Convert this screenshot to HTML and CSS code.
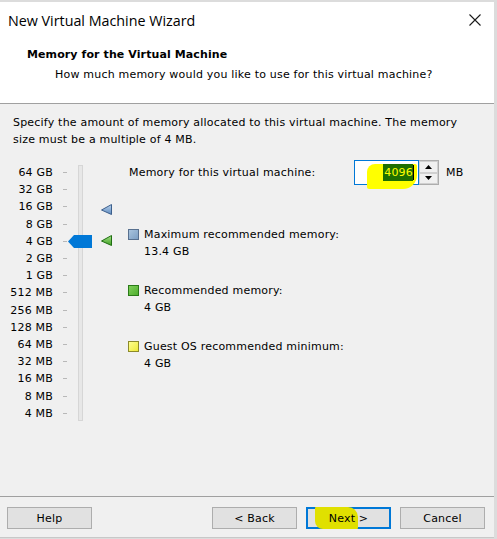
FILE: index.html
```html
<!DOCTYPE html>
<html>
<head>
<meta charset="utf-8">
<link rel="stylesheet" href="styles.css">
</head>
<body>
<div class="window">
  <div class="titlebar">
    <span class="title">New Virtual Machine Wizard</span>
    <svg class="close" width="12" height="12" viewBox="0 0 12 12"><path d="M0.5 0.5 L11.5 11.5 M11.5 0.5 L0.5 11.5" stroke="#1a1a1a" stroke-width="1.1" fill="none"/></svg>
  </div>
  <div class="header">
    <div class="h-title">Memory for the Virtual Machine</div>
    <div class="h-sub">How much memory would you like to use for this virtual machine?</div>
  </div>
  <div class="body">
    <p class="intro">Specify the amount of memory allocated to this virtual machine. The memory<br>size must be a multiple of 4 MB.</p>
    <div class="main">
      <div class="scale">
        <div class="row"><span class="lbl">64 GB</span><span class="tick"></span></div>
        <div class="row"><span class="lbl">32 GB</span><span class="tick"></span></div>
        <div class="row"><span class="lbl">16 GB</span><span class="tick"></span></div>
        <div class="row"><span class="lbl">8 GB</span><span class="tick"></span></div>
        <div class="row"><span class="lbl">4 GB</span><span class="tick"></span></div>
        <div class="row"><span class="lbl">2 GB</span><span class="tick"></span></div>
        <div class="row"><span class="lbl">1 GB</span><span class="tick"></span></div>
        <div class="row"><span class="lbl">512 MB</span><span class="tick"></span></div>
        <div class="row"><span class="lbl">256 MB</span><span class="tick"></span></div>
        <div class="row"><span class="lbl">128 MB</span><span class="tick"></span></div>
        <div class="row"><span class="lbl">64 MB</span><span class="tick"></span></div>
        <div class="row"><span class="lbl">32 MB</span><span class="tick"></span></div>
        <div class="row"><span class="lbl">16 MB</span><span class="tick"></span></div>
        <div class="row"><span class="lbl">8 MB</span><span class="tick"></span></div>
        <div class="row"><span class="lbl">4 MB</span><span class="tick"></span></div>
      </div>
      <div class="slider">
        <div class="track"></div>
        <svg class="thumb" width="24" height="13" viewBox="0 0 24 13"><path d="M0 6.5 L6 0 H24 V13 H6 Z" fill="#0078d7"/></svg>
        <svg class="marker marker-max" width="12" height="11" viewBox="0 0 12 11">
          <defs><linearGradient id="gb" x1="0" y1="0" x2="0" y2="1"><stop offset="0" stop-color="#b9d3ee"/><stop offset="1" stop-color="#5d89bd"/></linearGradient></defs>
          <path d="M0.5 6 L10.5 0.5 V10.5 Z" fill="url(#gb)" stroke="#3c5f8c" stroke-width="1"/>
        </svg>
        <svg class="marker marker-rec" width="12" height="11" viewBox="0 0 12 11">
          <defs><linearGradient id="gg" x1="0" y1="0" x2="0" y2="1"><stop offset="0" stop-color="#a6e08a"/><stop offset="1" stop-color="#3da020"/></linearGradient></defs>
          <path d="M0.5 6 L10.5 0.5 V10.5 Z" fill="url(#gg)" stroke="#1f6e12" stroke-width="1"/>
        </svg>
      </div>
      <div class="info">
        <div class="mem-row">
          <span class="mem-label">Memory for this virtual machine:</span>
          <div class="spin">
            <div class="field">
              <span class="hl"></span>
              <span class="sel">4096</span><span class="caret"></span>
            </div>
            <div class="spin-btns">
              <div class="sbtn"><svg width="7" height="4" viewBox="0 0 7 4"><path d="M0 4 L3.5 0 L7 4 Z" fill="#000"/></svg></div>
              <div class="sbtn"><svg width="7" height="4" viewBox="0 0 7 4"><path d="M0 0 L3.5 4 L7 0 Z" fill="#000"/></svg></div>
            </div>
          </div>
          <span class="unit">MB</span>
        </div>
        <div class="legend">
          <div class="item">
            <div class="item-head"><span class="sq sq-max"></span><span>Maximum recommended memory:</span></div>
            <div class="item-val">13.4 GB</div>
          </div>
          <div class="item">
            <div class="item-head"><span class="sq sq-rec"></span><span>Recommended memory:</span></div>
            <div class="item-val">4 GB</div>
          </div>
          <div class="item">
            <div class="item-head"><span class="sq sq-min"></span><span>Guest OS recommended minimum:</span></div>
            <div class="item-val">4 GB</div>
          </div>
        </div>
      </div>
    </div>
  </div>
  <div class="footer">
    <button class="btn">Help</button>
    <div class="spacer"></div>
    <button class="btn">&lt; Back</button>
    <button class="btn btn-next"><span class="hl-next"></span><span class="btn-text">Next &gt;</span></button>
    <button class="btn">Cancel</button>
  </div>
</div>
</body>
</html>
```

FILE: styles.css
```css
* { box-sizing: border-box; }
html, body { margin: 0; padding: 0; }
body {
  background: #dcdcdc;
  font-family: "DejaVu Sans", Tahoma, sans-serif;
  font-size: 11px;
  letter-spacing: 0.2px;
  color: #000;
  width: 497px;
  height: 539px;
  overflow: hidden;
}
.window {
  margin-top: 2px;
  width: 494px;
  height: 536px;
  background: #f0f0f0;
  display: flex;
  flex-direction: column;
}
.titlebar {
  background: #fff;
  height: 36px;
  display: flex;
  align-items: center;
  padding-left: 8px;
  padding-right: 13px;
}
.title {
  font-family: "Open Sans", "Noto Sans", sans-serif;
  font-size: 14.3px;
  letter-spacing: 0;
  color: #000;
  flex: 1;
}
.close { display: block; }
.header {
  background: #fff;
  height: 66px;
  border-bottom: 1px solid #a0a0a0;
  padding: 9px 0 0 27px;
}
.h-title { font-weight: bold; line-height: 16px; letter-spacing: 0.1px; }
.h-sub { line-height: 16px; margin-top: 4px; padding-left: 28px; }
.body { flex: 1; padding: 0 0 0 13px; }
.intro { margin: 10px 0 0; line-height: 17px; }
.main {
  display: flex;
  margin-left: -13px;
  margin-top: 16px;
}
.scale { width: 68px; }
.row {
  display: flex;
  align-items: center;
  height: 17.2px;
}
.lbl { width: 53px; text-align: right; }
.tick {
  width: 4px;
  height: 1px;
  background: #b8b8b8;
  margin-left: 10px;
}
.slider {
  position: relative;
  width: 60px;
}
.track {
  margin-left: 10px;
  margin-top: 1px;
  width: 5px;
  height: 256px;
  background: #e7e7e7;
  border: 1px solid #d6d6d6;
}
.thumb { position: absolute; left: 0; top: 71px; }
.marker { position: absolute; left: 33px; }
.marker-max { top: 40px; }
.marker-rec { top: 71px; }
.info { flex: 1; }
.mem-row {
  display: flex;
  align-items: center;
  margin-top: -4px;
  height: 25px;
}
.mem-label { width: 226px; padding-left: 1px; }
.spin { display: flex; height: 25px; }
.field {
  position: relative;
  width: 65px;
  height: 25px;
  background: #fff;
  border: 1px solid #0078d7;
  display: flex;
  align-items: center;
  justify-content: flex-end;
  padding-right: 4px;
}
.hl {
  position: absolute;
  left: 12px;
  top: 3px;
  width: 50px;
  height: 25px;
  background: #ffff00;
  border-radius: 8px 2px 14px 2px;
}
.sel {
  position: relative;
  background: #1e6f00;
  color: #ffff00;
  padding: 1px 0 1px 1px;
  line-height: 15px;
}
.caret {
  position: relative;
  width: 1px;
  height: 15px;
  background: #000;
}
.spin-btns {
  width: 20px;
  display: flex;
  flex-direction: column;
  border: 1px solid #adadad;
  border-left: none;
}
.sbtn {
  flex: 1;
  display: flex;
  align-items: center;
  justify-content: center;
  background: #f0f0f0;
  border: 1px solid #d0d0d0;
}
.unit { margin-left: 7px; }
.legend { margin-top: 41px; }
.item { margin-bottom: 22px; }
.item-head {
  display: flex;
  align-items: center;
  height: 17px;
}
.item-val { height: 17px; line-height: 17px; padding-left: 16px; }
.sq {
  width: 11px;
  height: 11px;
  margin-right: 5px;
  border: 1px solid;
}
.sq-max { background: linear-gradient(135deg, #a9c4de, #7d9fc4); border-color: #58708f; }
.sq-rec { background: linear-gradient(135deg, #7fd05a, #4fae2e); border-color: #2a7a18; }
.sq-min { background: linear-gradient(135deg, #ffff90, #eeea3a); border-color: #8c8a2a; }
.footer {
  height: 42px;
  border-top: 1px solid #a0a0a0;
  border-bottom: 1px solid #c8c8c8;
  display: flex;
  align-items: flex-start;
  padding: 10px 0 0 7px;
}
.spacer { flex: 1; max-width: 122px; }
.btn {
  position: relative;
  width: 85px;
  height: 22px;
  margin-right: 9px;
  background: #e1e1e1;
  border: 1px solid #adadad;
  font-family: "DejaVu Sans", Tahoma, sans-serif;
  font-size: 11px;
  letter-spacing: 0.2px;
  color: #000;
  padding: 0;
}
.btn-next { border: 2px solid #0078d7; }
.hl-next {
  position: absolute;
  left: 7px;
  top: -2px;
  width: 43px;
  height: 22px;
  background: #e0e000;
  border-radius: 1px 10px 1px 8px;
}
.btn-text { position: relative; }
```
